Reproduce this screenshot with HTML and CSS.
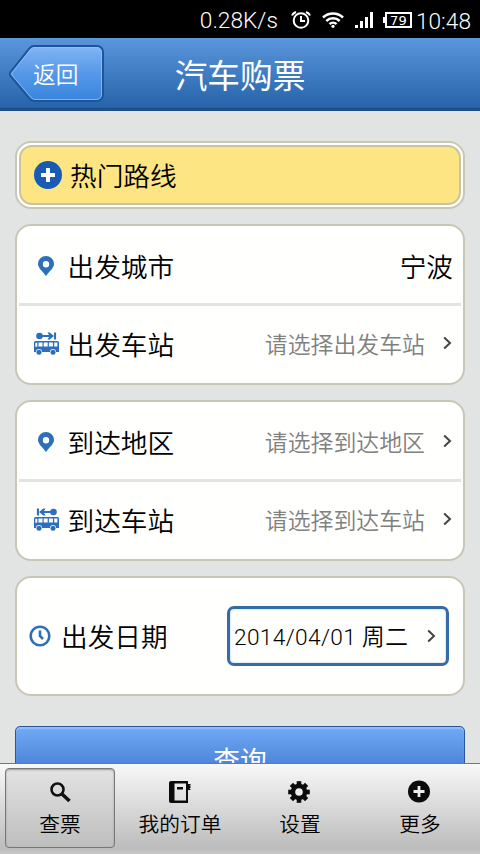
FILE: index.html
```html
<!DOCTYPE html>
<html lang="zh-CN">
<head>
<meta charset="utf-8">
<title>汽车购票</title>
<link rel="stylesheet" href="styles.css">
</head>
<body>
<svg class="defs" width="0" height="0">
  <symbol id="pin" viewBox="0 0 16 20"><path fill-rule="evenodd" d="M8 0a8 8 0 0 0-8 8c0 4 4.400 7 8 12 3.600-5 8-8 8-12a8 8 0 0 0-8-8zm0 5a3.200 3.200 0 1 1 0 6.400A3.200 3.200 0 0 1 8 5z"/></symbol>
  <symbol id="bus" viewBox="0 0 25 14"><path fill-rule="evenodd" d="M1.500 0h22a1.500 1.500 0 0 1 1.500 1.500V11h-3a3 3 0 0 0-6 0H8a3 3 0 0 0-6 0H0V1.500A1.500 1.500 0 0 1 1.500 0zM1.300 1.800v4h2v-4zM4.500 1.500v4h4v-4zm5.200 0v4h4v-4zm5.200 0v4h4v-4zm5.300 0v4h3.200v-4z"/><circle cx="5" cy="11.300" r="2.500"/><circle cx="19" cy="11.300" r="2.500"/></symbol>
  <symbol id="route" viewBox="0 0 21 8"><circle cx="3.500" cy="4" r="3.300"/><path d="M5 3h8L11.500 .5h2.200L18 4l-4.300 3.500h-2.200L13 5H5zM18 .5h2.100v7H18z"/></symbol>
  <symbol id="chevron" viewBox="0 0 9 14"><path d="M1.200 1.500 7 7l-5.800 5.500" fill="none" stroke="currentColor" stroke-width="2"/></symbol>
</svg>
<div class="status">
  <span class="speed">0.28K/s</span>
  <svg class="alarm" width="20" height="18" viewBox="0 0 20 18" fill="none" stroke="#fff" stroke-width="2"><circle cx="10" cy="9.500" r="7.300"/><path d="M10 5v5h4M1 4.500Q2 2 5 1M19 4.500Q18 2 15 1"/></svg>
  <svg class="wifi" width="22" height="16" viewBox="0 0 22 16" fill="none" stroke="#fff" stroke-width="2.500"><path d="M1 5.500a14.500 14.500 0 0 1 20 0M4.300 9a9.700 9.700 0 0 1 13.400 0M7.500 12.200a5 5 0 0 1 7 0"/><circle cx="11" cy="14.300" r="1.600" fill="#fff" stroke="none"/></svg>
  <svg class="signal" width="19" height="16" viewBox="0 0 19 16" fill="#fff"><path d="M0 13h3v3H0zM5 9h3v7H5zM10 5h3v11h-3zM15 0h3v16h-3z"/></svg>
  <span class="battery">79</span>
  <span class="time">10:48</span>
</div>
<header class="header">
  <div class="back">
    <svg class="back-shape" width="97" height="60" viewBox="0 0 97 60">
      <defs><linearGradient id="bg" x1="0" y1="0" x2="0" y2="1"><stop offset="0" stop-color="#83b5f4"/><stop offset=".5" stop-color="#5598e9"/><stop offset="1" stop-color="#3785dc"/></linearGradient></defs>
      <path d="M25 2h63a6 6 0 0 1 6 6v43a6 6 0 0 1-6 6H26q-3 0-5-2L1.500 32q-1.500-2 0-4L20 5q2-3 5-3z" fill="url(#bg)" stroke="#1c559b" stroke-width="2"/>
      <path d="M25.500 3.500H87a5 5 0 0 1 5.500 5v42a5 5 0 0 1-5.500 5H26q-2 0-4-2L3 31q-1-1 0-2L21 6q2-2.500 4.500-2.500z" fill="none" stroke="#9cc4f6" stroke-opacity=".7"/>
    </svg>
    <span class="back-label">返回</span>
  </div>
  <h1 class="title">汽车购票</h1>
</header>
<main class="main">
  <section class="card hot">
    <div class="hot-inner">
      <svg width="28" height="28" viewBox="0 0 28 28"><circle cx="14" cy="14" r="14" fill="#185bb4"/><path d="M14 7v14M7 14h14" stroke="#fff" stroke-width="4"/></svg>
      <span>热门路线</span>
    </div>
  </section>
  <section class="card">
    <div class="row"><span class="icon"><svg width="16" height="20"><use href="#pin"/></svg></span><span class="label">出发城市</span><span class="city">宁波</span></div>
    <div class="row"><span class="icon station"><svg class="route" width="21" height="8"><use href="#route"/></svg><svg width="25" height="14"><use href="#bus"/></svg></span><span class="label">出发车站</span><span class="hint">请选择出发车站</span><svg class="chev" width="9" height="14"><use href="#chevron"/></svg></div>
  </section>
  <section class="card">
    <div class="row"><span class="icon"><svg width="16" height="20"><use href="#pin"/></svg></span><span class="label">到达地区</span><span class="hint">请选择到达地区</span><svg class="chev" width="9" height="14"><use href="#chevron"/></svg></div>
    <div class="row"><span class="icon station"><svg class="route flip" width="21" height="8"><use href="#route"/></svg><svg width="25" height="14"><use href="#bus"/></svg></span><span class="label">到达车站</span><span class="hint">请选择到达车站</span><svg class="chev" width="9" height="14"><use href="#chevron"/></svg></div>
  </section>
  <section class="card date-card">
    <svg class="clock" width="22" height="22" viewBox="0 0 22 22" fill="none" stroke="#2e6fb9"><circle cx="11" cy="11" r="9.300" stroke-width="2.600"/><path d="M11 5.500V11l3 3" stroke-width="2.600"/></svg>
    <span class="label">出发日期</span>
    <div class="date"><span>2014/04/01 周二</span><svg class="chev" width="9" height="14"><use href="#chevron"/></svg></div>
  </section>
  <div class="query">查询</div>
</main>
<nav class="nav">
  <div class="tab active"><svg width="24" height="24" viewBox="0 0 24 24" fill="none" stroke="#111"><circle cx="9.500" cy="9.500" r="6" stroke-width="2.600"/><path d="m14 14 7.500 7" stroke-width="3.600"/></svg><span>查票</span></div>
  <div class="tab"><svg width="24" height="24" viewBox="0 0 24 24"><path fill-rule="evenodd" d="M3 1h17v3h2.500v1.500h-1L23 7l-1.500 1.500L23 10h-3v13H3q-2 0-2-2V3q0-2 2-2zm3.500 2.500v17h11.500V3.500zM9 7h6v2.500H9z" fill="#0b0b0b"/></svg><span>我的订单</span></div>
  <div class="tab"><svg width="24" height="24" viewBox="0 0 24 24"><g transform="translate(11 12)" fill="#0b0b0b"><path id="tooth" d="M-2.300-10.800h4.600V10.800h-4.600z"/><use href="#tooth" transform="rotate(45)"/><use href="#tooth" transform="rotate(90)"/><use href="#tooth" transform="rotate(135)"/><circle r="8.300"/><circle r="3.800" fill="#ececec"/></g></svg><span>设置</span></div>
  <div class="tab"><svg width="24" height="24" viewBox="0 0 24 24"><circle cx="11" cy="11.500" r="11" fill="#0b0b0b"/><path d="M11 6v11M5.500 11.500h11" stroke="#eee" stroke-width="2.800"/></svg><span>更多</span></div>
</nav>
</body>
</html>
```

FILE: styles.css
```css
* { box-sizing: border-box; }
body {
  margin: 0;
  height: 854px;
  overflow: hidden;
  display: flex;
  flex-direction: column;
  background: #e2e4e4;
  color: #000;
  font-family: Roboto, "Noto Sans CJK SC", sans-serif;
  font-weight: 350;
  font-size: 26.67px;
}
svg { display: block; flex: none; }
.defs { position: absolute; }
.status {
  height: 38px;
  flex: none;
  background: #000;
  color: #fff;
  display: flex;
  align-items: center;
  justify-content: flex-end;
  padding-right: 9px;
  font-size: 22.7px;
}
.speed { margin-right: 13px; padding-top: 2px; }
.alarm { margin-right: 11px; }
.wifi { margin-right: 11px; }
.signal { margin-right: 11px; }
.status svg, .battery { position: relative; top: 1px; }
.battery {
  width: 27px;
  height: 16px;
  border: 2px solid #fff;
  font: 13px/13px "DejaVu Sans", sans-serif;
  text-align: center;
  margin-right: 4px;
}
.battery::before {
  content: "";
  position: absolute;
  left: -4px;
  top: 3px;
  width: 2px;
  height: 6px;
  background: #fff;
}
.time { padding-top: 4px; }
.header {
  height: 73px;
  flex: none;
  display: grid;
  grid-template-columns: 167px 146px 1fr;
  background: linear-gradient(#5b96dc, #2663a9);
  border-bottom: 3px solid #1e4f86;
  color: #fff;
}
.back { display: grid; padding: 6px 0 0 9px; }
.back-shape, .back-label { grid-area: 1 / 1; }
.back-label { font-size: 22.7px; line-height: 60px; padding: 2px 0 0 24px; }
.title { margin: 0; font-size: 32.7px; font-weight: 400; line-height: 79px; height: 70px; text-align: center; white-space: nowrap; }
.main { flex: 1; min-height: 0; overflow: hidden; padding: 30px 15px 0; display: flex; flex-direction: column; }
.card {
  flex: none;
  background: #fffffe;
  border: 2px solid #c9c6b5;
  border-radius: 16px;
  padding: 0 2px;
  margin-bottom: 15px;
  height: 161px;
}
.card.hot { height: 68px; padding: 2px; }
.hot-inner {
  height: 60px;
  border: 2px solid #c9c3a0;
  border-radius: 13px;
  background: #fee583;
  display: flex;
  align-items: center;
  padding-left: 13px;
  gap: 8px;
}
.hot-inner span { padding-bottom: 2px; }
.row { height: 75px; display: flex; align-items: center; padding-right: 8px; }
.row:first-child { height: 80px; padding-top: 2px; border-bottom: 3px solid #e3e3e3; }
.icon { width: 48.5px; padding-left: 19px; fill: #2e6fb9; }
.station { padding-left: 15px; }
.route { margin: 0 0 1px 2px; }
.flip { transform: scaleX(-1); }
.label { flex: 1; padding-bottom: 1px; }
.hint { color: #808080; font-size: 22.9px; margin-right: 18px; padding-bottom: 2px; }
.chev { color: #444; margin-bottom: 1px; }
.row .chev { margin-right: 1px; }
.date-card { height: 120px; display: flex; align-items: center; padding: 0 14px 0 12px; }
.date-card .label { padding-bottom: 2px; }
.clock { margin-right: 10px; }
.date {
  width: 222px;
  height: 60px;
  border: 3px solid #386aa4;
  border-radius: 7px;
  box-shadow: inset 0 0 3px #bcd3ef;
  display: flex;
  align-items: center;
  justify-content: space-between;
  padding: 0 10px 0 4px;
  font-size: 22.7px;
  letter-spacing: 0.35px;
  white-space: nowrap;
}
.date span { padding-bottom: 2px; }
.date .chev { margin-bottom: 0; }
.query {
  flex: none;
  height: 66px;
  border: 1.500px solid #28569c;
  border-radius: 5px;
  background: linear-gradient(#72a9f7, #336bc2);
  box-shadow: inset 0 2px 1px #94bdf8;
  color: #fff;
  font-weight: 400;
  line-height: 68px;
  text-align: center;
  margin-top: 15px;
}
.nav {
  height: 91px;
  flex: none;
  border-top: 1px solid #777;
  background: linear-gradient(#f8f8f8, #bcbcbc 94%, #c8c8c8);
  display: grid;
  grid-template-columns: repeat(4, 1fr);
  padding-top: 4px;
}
.tab {
  height: 80px;
  margin: 0 5px;
  display: flex;
  flex-direction: column;
  align-items: center;
  padding-top: 12px;
  font-size: 20.7px;
  line-height: 43px;
  white-space: nowrap;
}
.active { border: 1px solid #777; border-radius: 4px; background: linear-gradient(#e3e3e3, #bebebe); padding-top: 11px; box-shadow: inset 0 1px 2px #999; }
```
